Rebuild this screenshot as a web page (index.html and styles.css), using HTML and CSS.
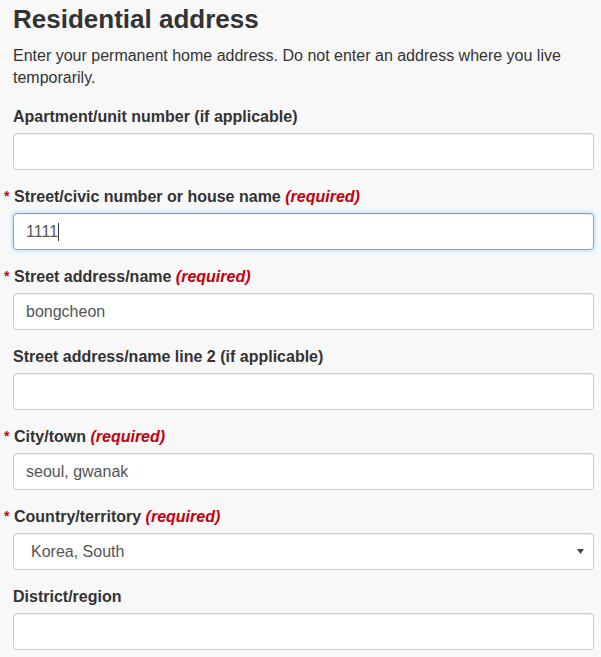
FILE: index.html
```html
<!DOCTYPE html>
<html lang="en">
<head>
<meta charset="utf-8">
<title>Residential address</title>
<link rel="stylesheet" href="styles.css">
</head>
<body>
<main class="page">
  <h1 class="title">Residential address</h1>
  <p class="intro">Enter your permanent home address. Do not enter an address where you live temporarily.</p>

  <div class="group">
    <label class="label">Apartment/unit number (if applicable)</label>
    <input class="field" type="text" value="">
  </div>

  <div class="group">
    <label class="label"><span class="star">*</span>Street/civic number or house name <em class="req">(required)</em></label>
    <div class="field-wrap">
      <input class="field focused" type="text" value="1111">
      <span class="caret"></span>
    </div>
  </div>

  <div class="group">
    <label class="label"><span class="star">*</span>Street address/name <em class="req">(required)</em></label>
    <input class="field" type="text" value="bongcheon">
  </div>

  <div class="group">
    <label class="label">Street address/name line 2 (if applicable)</label>
    <input class="field" type="text" value="">
  </div>

  <div class="group">
    <label class="label"><span class="star">*</span>City/town <em class="req">(required)</em></label>
    <input class="field" type="text" value="seoul, gwanak">
  </div>

  <div class="group">
    <label class="label"><span class="star">*</span>Country/territory <em class="req">(required)</em></label>
    <div class="field-wrap">
      <div class="field select">Korea, South</div>
      <svg class="arrow" width="7" height="5" viewBox="0 0 7 5"><path d="M0 0H7L3.5 5Z" fill="#444"/></svg>
    </div>
  </div>

  <div class="group">
    <label class="label">District/region</label>
    <input class="field" type="text" value="">
  </div>
</main>
</body>
</html>
```

FILE: styles.css
```css
html, body {
  margin: 0;
  padding: 0;
  background: #f8f8f8;
}
body {
  font-family: "Liberation Sans", Arial, sans-serif;
  font-size: 16px;
  line-height: 1.42857;
  color: #333;
}
.page {
  width: 581px;
  margin-left: 13px;
  padding-top: 5px;
}
.title {
  margin: 0;
  font-size: 26px;
  line-height: 1.1;
  font-weight: bold;
  color: #333;
}
.intro {
  margin: 11px 0 15px;
  color: #333;
}
.group {
  margin-bottom: 15px;
}
.label {
  display: block;
  font-weight: bold;
  line-height: 23px;
  margin-bottom: 5px;
  color: #333;
}
.star {
  color: #c00;
  font-size: 14px;
  margin-left: -9px;
  margin-right: 3px;
  display: inline-block;
  width: 7px;
  vertical-align: 1px;
}
.req {
  color: #c4000f;
  font-style: italic;
  font-weight: bold;
}
.field-wrap {
  position: relative;
}
.field {
  display: block;
  box-sizing: border-box;
  width: 100%;
  height: 37px;
  margin: 0;
  padding: 0 12px;
  border: 1px solid #ccc;
  border-radius: 4px;
  background: #fff;
  font-family: "Liberation Sans", Arial, sans-serif;
  font-size: 16px;
  color: #555;
  box-shadow: inset 0 1px 1px rgba(0,0,0,0.075);
  outline: none;
}
.field.focused {
  border-color: #66afe9;
  box-shadow: inset 0 1px 1px rgba(0,0,0,0.075), 0 0 4px rgba(102,175,233,0.6);
}
.caret {
  position: absolute;
  left: 45px;
  top: 10px;
  width: 1px;
  height: 18px;
  background: #333;
}
.select {
  display: flex;
  align-items: center;
  padding-left: 17px;
  padding-top: 2px;
}
.arrow {
  position: absolute;
  right: 10px;
  top: 16px;
}
```
